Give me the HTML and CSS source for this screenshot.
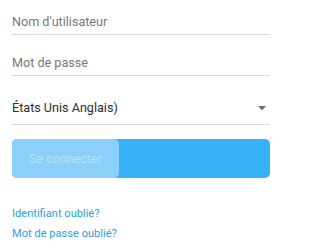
FILE: index.html
```html
<!DOCTYPE html>
<html lang="fr">
<head>
<meta charset="utf-8">
<link rel="stylesheet" href="styles.css">
</head>
<body>
<form class="login">
  <div class="field field-first"><span class="placeholder">Nom d'utilisateur</span></div>
  <div class="field field-second"><span class="placeholder">Mot de passe</span></div>
  <div class="field select">
    <span class="value">États Unis Anglais)</span>
    <svg class="caret" width="8" height="5" viewBox="0 0 8 5"><path d="M0 0H8L4 4.5Z" fill="#6f6f6f"/></svg>
  </div>
  <div class="button">
    <div class="button-progress"><span>Se connecter</span></div>
  </div>
  <div class="links">
    <a class="link">Identifiant oublié?</a>
    <a class="link">Mot de passe oublié?</a>
  </div>
</form>
</body>
</html>
```
FILE: styles.css
```css
html, body {
  margin: 0;
  padding: 0;
  background: #ffffff;
}
body {
  font-family: Roboto, "Liberation Sans", sans-serif;
  width: 283px;
  height: 252px;
  overflow: hidden;
}
.login {
  display: flex;
  flex-direction: column;
  padding: 0 13px 0 12px;
}
.field {
  display: flex;
  align-items: center;
  font-size: 12.6px;
  line-height: 16px;
  padding: 0 0 4px 0;
  border-bottom: 1.5px solid #d9d9d9;
}
.field-first {
  margin-top: 14px;
}
.field-second {
  margin-top: 20px;
}
.placeholder {
  color: #777777;
}
.select {
  margin-top: 24px;
  padding-bottom: 8px;
  justify-content: space-between;
}
.value {
  color: #2e2e2e;
}
.caret {
  margin-right: 4px;
}
.button {
  margin-top: 14px;
  height: 39px;
  border-radius: 5px;
  background: #37b1f6;
  display: flex;
}
.button-progress {
  width: 107px;
  border-radius: 5px;
  background: #8bcffa;
  display: flex;
  align-items: center;
  justify-content: center;
}
.button-progress span {
  color: #b8e1fc;
  font-size: 12.5px;
}
.links {
  display: flex;
  flex-direction: column;
  gap: 7px;
  margin-top: 29px;
}
.link {
  color: #2a9fe3;
  font-size: 11.1px;
  line-height: 13px;
}
```
